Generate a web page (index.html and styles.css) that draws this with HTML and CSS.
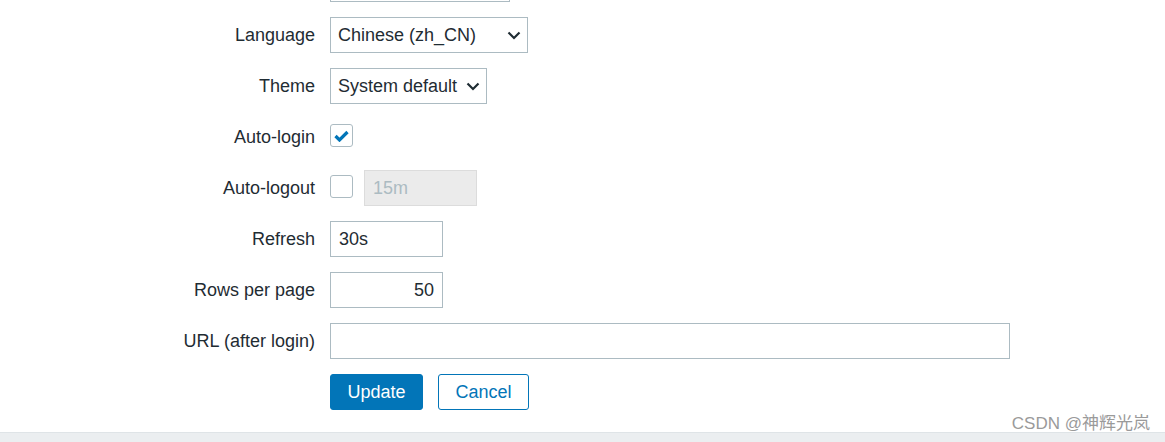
FILE: index.html
```html
<!DOCTYPE html>
<html lang="en">
<head>
    <meta charset="UTF-8">
    <title>User settings</title>
    <link rel="stylesheet" href="styles.css">
</head>
<body>

    <div class="page">
        <form class="form-grid">
            <!-- row cut off at top of the window -->
            <label class="label"></label>
            <div class="field">
                <input type="text" class="input input-top">
            </div>

            <label class="label">Language</label>
            <div class="field">
                <div class="select select-lang">
                    <span>Chinese (zh_CN)</span>
                    <svg width="14" height="9" viewBox="0 0 14 9"><path d="M1.5 1.5 L7 7 L12.5 1.5" fill="none" stroke="#1f2c33" stroke-width="2.2"/></svg>
                </div>
            </div>

            <label class="label">Theme</label>
            <div class="field">
                <div class="select select-theme">
                    <span>System default</span>
                    <svg width="14" height="9" viewBox="0 0 14 9"><path d="M1.5 1.5 L7 7 L12.5 1.5" fill="none" stroke="#1f2c33" stroke-width="2.2"/></svg>
                </div>
            </div>

            <label class="label">Auto-login</label>
            <div class="field">
                <span class="checkbox checked">
                    <svg width="15" height="12" viewBox="0 0 15 12"><path d="M1.5 6 L5.5 10 L13.5 2" fill="none" stroke="#0275b8" stroke-width="3.2"/></svg>
                </span>
            </div>

            <label class="label">Auto-logout</label>
            <div class="field">
                <span class="checkbox"></span>
                <input type="text" class="input input-short" value="15m" disabled>
            </div>

            <label class="label">Refresh</label>
            <div class="field">
                <input type="text" class="input input-short" value="30s">
            </div>

            <label class="label">Rows per page</label>
            <div class="field">
                <input type="text" class="input input-short input-num" value="50">
            </div>

            <label class="label">URL (after login)</label>
            <div class="field">
                <input type="text" class="input input-url">
            </div>

            <div></div>
            <div class="field buttons">
                <button type="button" class="btn btn-primary">Update</button>
                <button type="button" class="btn btn-alt">Cancel</button>
            </div>
        </form>

        <div class="watermark">CSDN @神辉光岚</div>
    </div>

    <footer class="footer-bar"></footer>

</body>
</html>
```

FILE: styles.css
```css
body {
    margin: 0;
    padding: 0;
    background-color: #fff;
    color: #1f2c33;
    font-family: 'Liberation Sans', Arial, sans-serif;
    font-size: 18px;
    overflow: hidden;
}

.page {
    position: relative;
    height: 432px;
    overflow: hidden;
}

.form-grid {
    display: grid;
    grid-template-columns: 315px auto;
    grid-auto-rows: 36px;
    column-gap: 15px;
    row-gap: 15px;
    margin-top: -34px;
}

.label {
    text-align: right;
    align-self: center;
    line-height: 20px;
}

.field {
    display: flex;
    align-items: center;
    gap: 11px;
}

.input {
    box-sizing: border-box;
    height: 36px;
    border: 1px solid #acbbc2;
    background: #fff;
    color: #1f2c33;
    font-family: inherit;
    font-size: 18px;
    padding: 0 8px;
    margin: 0;
    outline: none;
}

.input-top {
    width: 180px;
}

.input-short {
    width: 113px;
}

.input-short:disabled {
    background-color: #ebebeb;
    color: #acbbc2;
    border-color: #dcdcdc;
}

.input-num {
    text-align: right;
}

.input-url {
    width: 680px;
}

.select {
    box-sizing: border-box;
    height: 36px;
    border: 1px solid #acbbc2;
    display: flex;
    align-items: center;
    justify-content: space-between;
    padding: 0 6px 0 7px;
}

.select-lang {
    width: 198px;
}

.select-theme {
    width: 157px;
}

.checkbox {
    box-sizing: border-box;
    width: 23px;
    height: 23px;
    border: 1px solid #acbbc2;
    border-radius: 3px;
    display: inline-flex;
    align-items: center;
    justify-content: center;
    background: #fff;
}

.field .checkbox {
    align-self: flex-start;
    margin-top: 5px;
}

.buttons {
    gap: 15px;
}

.btn {
    box-sizing: border-box;
    height: 36px;
    font-family: inherit;
    font-size: 18px;
    border-radius: 3px;
    border: 1px solid #0275b8;
    cursor: pointer;
    padding: 0;
}

.btn-primary {
    width: 93px;
    background-color: #0275b8;
    color: #fff;
}

.btn-alt {
    width: 91px;
    background-color: #fff;
    color: #0275b8;
}

.watermark {
    position: absolute;
    right: 15px;
    bottom: -2px;
    font-family: 'Liberation Sans', 'Noto Sans CJK SC', sans-serif;
    font-size: 17px;
    color: #9a9a9a;
}

.footer-bar {
    height: 10px;
    background-color: #ebeef0;
    border-top: 1px solid #dfe4e7;
}
```
